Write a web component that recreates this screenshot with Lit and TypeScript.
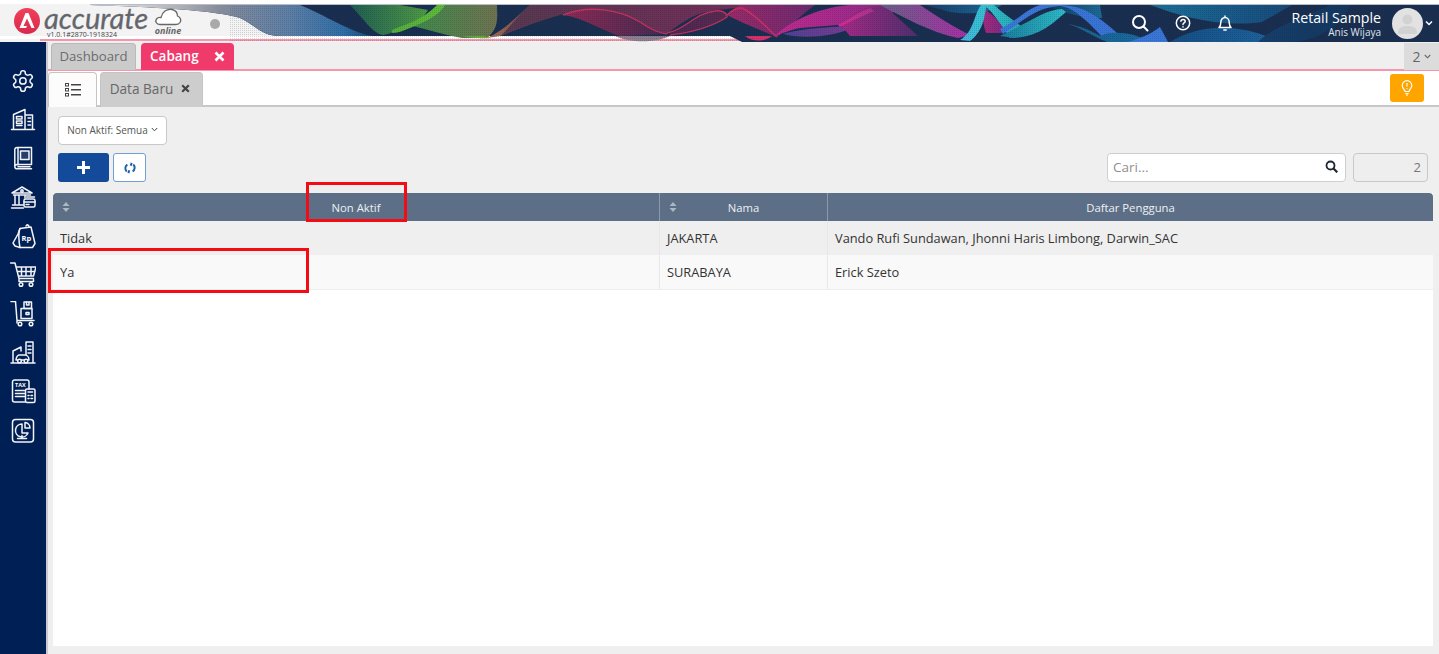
import { LitElement, html, css, svg } from "lit";
import { customElement } from "lit/decorators.js";

// banner shapes, painted in order over the navy base
type Shape = { d: string; from: string; to: string; edge?: string };

const SHAPES: Shape[] = [
  // green part
  { d: "M350 5C365 20 372 33 383 35C395 33 410 25 422 19L428 10L400 5Z", from: "#1f5d52", to: "#4f9a44" },
  { d: "M440 5C430 15 420 22 413 26C430 30 445 35 462 38H487C500 28 497 15 497 5Z", from: "#3f8a4a", to: "#6f7350" },
  { d: "M392 30C405 24 420 22 437 5H445C440 15 425 22 410 28C403 31 397 33 392 33Z", from: "#55ad3c", to: "#5fbc38" },
  { d: "M462 36C468 37 480 39 490 38L484 36Z", from: "#63b33a", to: "#63b33a" },
  // brown to mauve
  { d: "M487 38C505 30 515 18 530 5H565L563 14C540 20 520 28 500 36Z", from: "#a06c50", to: "#4e3a50" },
  { d: "M500 36C520 28 540 20 563 14C590 5 615 12 640 24C650 30 660 33 667 33C680 25 690 15 710 11C720 9 730 9 737 8C760 8 780 8 805 5H530C515 18 510 28 500 36Z", from: "#57384f", to: "#7a2c5c" },
  // plum bodies with pink crests
  { d: "M563 15C590 4 620 10 640 22C650 29 658 33 667 34L620 36C600 30 585 18 563 15Z", from: "#8c2a55", to: "#452a50", edge: "M563 15C590 4 620 10 640 22C650 29 658 33 667 34" },
  { d: "M667 33C685 30 695 13 715 11C725 10 728 14 727 17C715 25 695 32 680 35Z", from: "#4a2850", to: "#5a2a52", edge: "M667 33C685 30 695 13 715 11C722 10 727 13 727 17C715 25 695 32 670 35" },
  { d: "M727 15C740 22 760 30 777 37C790 28 800 15 815 5H740C735 8 730 11 727 15Z", from: "#9a2a68", to: "#6c2a70", edge: "M727 15C732 10 736 8 742 8C755 14 765 26 777 37" },
  // magenta
  { d: "M773 37C790 22 815 8 850 5H905C890 15 875 22 850 24L800 28C790 30 780 34 773 37Z", from: "#c02a8e", to: "#8a2a88" },
  { d: "M783 34C810 26 840 28 858 25C840 36 805 40 783 34Z", from: "#4f4296", to: "#7d3a90" },
  { d: "M840 24C855 12 862 6 885 6L918 36H850Z", from: "#a52a86", to: "#4f2e6c" },
  { d: "M838 25C850 19 858 12 870 8L874 11C862 16 850 22 840 27Z", from: "#d82c92", to: "#a8348c" },
  // lilac fan into cyan and blues
  { d: "M880 5H920C935 15 950 25 970 35L958 38C930 32 905 18 880 5Z", from: "#6a6088", to: "#a92fa4" },
  { d: "M925 5H1002C985 15 965 14 950 12Z", from: "#163f6b", to: "#1b6b9b" },
  { d: "M983 8C982 16 983 25 986 33H1005C1002 22 992 14 983 8Z", from: "#a52a80", to: "#7c2a80" },
  { d: "M960 40C974 32 974 14 981 5H987C984 14 985 30 970 41Z", from: "#4ab4dc", to: "#2fc4d2" },
  { d: "M984 5H994C1004 14 1016 22 1026 30L1010 38C1003 28 995 14 984 5Z", from: "#36c6d2", to: "#1f9fa8" },
  { d: "M1045 5C1065 14 1085 18 1102 18L1100 5Z", from: "#0f3a63", to: "#1d6a94" },
  { d: "M1000 36C1025 25 1045 9 1062 9L1066 12C1052 24 1040 36 1014 38Z", from: "#1a7a9c", to: "#2cbcc6" },
  { d: "M1003 34C1022 22 1036 7 1060 6C1075 7 1092 26 1107 42H1128C1108 26 1090 5 1060 5H1040C1028 8 1015 22 1000 29Z", from: "#3b77d8", to: "#3a72d6" },
  { d: "M1068 24C1080 27 1095 38 1108 42H1150C1135 32 1110 30 1100 36C1090 30 1080 26 1068 24Z", from: "#17628f", to: "#1a6aa0" },
  { d: "M1128 42C1148 36 1156 30 1160 27L1168 42Z", from: "#3a76d8", to: "#3a76d8" },
  { d: "M1150 5C1180 16 1220 28 1262 22L1292 5Z", from: "#1b6f99", to: "#17497a" },
  { d: "M1170 42C1195 26 1235 20 1280 42Z", from: "#154e82", to: "#1e639e" },
  { d: "M1258 42C1275 25 1300 20 1330 5H1350C1340 30 1310 42 1290 42Z", from: "#153f6b", to: "#14375f" },
];

const icons = [
  svg`<path transform="translate(.6 .6) scale(1.03)" d="M12.22 2h-.44a2 2 0 0 0-2 2v.18a2 2 0 0 1-1 1.73l-.43.25a2 2 0 0 1-2 0l-.15-.08a2 2 0 0 0-2.73.73l-.22.38a2 2 0 0 0 .73 2.73l.15.1a2 2 0 0 1 1 1.72v.51a2 2 0 0 1-1 1.74l-.15.09a2 2 0 0 0-.73 2.73l.22.38a2 2 0 0 0 2.73.73l.15-.08a2 2 0 0 1 2 0l.43.25a2 2 0 0 1 1 1.73V20a2 2 0 0 0 2 2h.44a2 2 0 0 0 2-2v-.18a2 2 0 0 1 1-1.73l.43-.25a2 2 0 0 1 2 0l.15.08a2 2 0 0 0 2.73-.73l.22-.39a2 2 0 0 0-.73-2.73l-.15-.08a2 2 0 0 1-1-1.74v-.5a2 2 0 0 1 1-1.74l.15-.09a2 2 0 0 0 .73-2.73l-.22-.38a2 2 0 0 0-2.73-.73l-.15.08a2 2 0 0 1-2 0l-.43-.25a2 2 0 0 1-1-1.73V4a2 2 0 0 0-2-2z"/><circle cx="12.9" cy="12.9" r="3.2"/>`,
  svg`<path d="M1.500 22.500h23M3.500 22V7.500L15 2.500v20M15 8h7.500v14.500M6.500 9.500h5.500v2.500H6.500zM6.500 14h5.500v2.500H6.500zM6.500 18.500h5.500M18 11h2.500M18 14.500h2.500M18 18h2.500"/>`,
  svg`<path d="M7 1.500h14.500v17H7A2.200 2.200 0 0 0 4.800 20.700 2.200 2.200 0 0 0 7 22.800h14.500M4.800 20.700V3.700A2.200 2.200 0 0 1 7 1.500M8 19V2M8 20.700h12"/><rect x="10.500" y="5" width="8.500" height="8.500" fill="#fff" fill-opacity=".15"/>`,
  svg`<path d="M2 8 12 2l10 6H2ZM3.500 10h17M5 11v8M9 11v8M15 11v2M2.500 20h11M1.500 23h12"/><circle cx="12" cy="6" r="1.200"/><rect x="14" y="14" width="11" height="8" rx="1.500"/><path d="M14 17h11M16 19.500h3M16.500 12h8"/>`,
  svg`<path d="M10 4.500 21 3l4 16.500-2.500 4H10L5 22 3 19l5-9z"/><path d="M10 4.500C8 8 9 19 10 23.500M19 3c0-2-2-3-3-1"/><text x="11.500" y="17" font-size="7.500" font-weight="700" font-family="Open Sans" fill="#fff" stroke="none">Rp</text>`,
  svg`<path d="M.5 1H5l4 15.500h14.500M6 5h20l-2.500 9H8.500M11.500 5v9M16 5v9M21 5v9M7 9.500h18M9 17.500v2h14.500v-2"/><circle cx="11" cy="22.500" r="1.800"/><circle cx="21" cy="22.500" r="1.800"/>`,
  svg`<path d="M1 .5h4.500l1.500 19h17M7 20v2"/><rect x="11" y="7.500" width="11" height="10"/><rect x="14" y="1" width="7.500" height="6.500"/><path d="M16 11.500h3v2h-3ZM16.500 1v3h2.500V1"/><circle cx="10" cy="23" r="1.800"/><circle cx="21" cy="23" r="1.800"/>`,
  svg`<path d="M1 23h24M3 22V11l8-4v4M16 22V2h7v20M18 6h3M18 9.500h3M18 13h3"/><path d="M6 20c0-3 2-5 3-5h6c2 0 4 2 4 5z" fill="#001f54"/><circle cx="9.500" cy="21" r="1.800" fill="#001f54"/><circle cx="16" cy="21" r="1.800" fill="#001f54"/>`,
  svg`<path d="M15 23H4.500A2 2 0 0 1 2.500 21V3A2 2 0 0 1 4.500 1H17a2 2 0 0 1 2 2v7M5.500 11.500h9M5.500 14.500h9M5.500 17.500h9"/><rect x="15.500" y="10" width="9.500" height="13.500" rx="1.500"/><path d="M18 13h4.500M18 16.500h1M21 16.500h1.500M18 19.500h1M21 19.500h1.500"/><text x="5" y="8" font-size="5.500" font-weight="700" font-family="Open Sans" fill="#fff" stroke="none">TAX</text>`,
  svg`<rect x="2.500" y="1.500" width="21" height="22.500" rx="3"/><path d="M12 6a6.500 6.500 0 1 0 6 9h-6z"/><path d="M15 4.500a5.500 5.500 0 0 1 5 5.500h-5z"/><path d="M12 17.500v2.500M7.500 20.500h9"/>`,
];

@customElement("app-root")
export class AppRoot extends LitElement {
  static styles = css`
    :host {
      display: block;
      position: relative;
      width: 1439px;
      height: 654px;
      overflow: hidden;
      background: #efefef;
      font-family: "Open Sans", "Noto Sans", sans-serif;
      color: #333;
    }
    .header {
      position: relative;
      height: 42px;
      box-sizing: border-box;
      padding: 4px 6px 0 14px;
      display: flex;
      align-items: center;
      background: #fff;
    }
    .art {
      position: absolute;
      inset: 0;
      width: 1439px;
      height: 42px;
    }
    .logo,
    .tools,
    .user {
      position: relative;
    }
    .logo {
      display: flex;
      align-items: flex-start;
      height: 38px;
    }
    .mark {
      width: 26px;
      height: 26px;
      margin-top: 4px;
    }
    .word {
      width: 104px;
      margin-left: 4px;
      line-height: 1;
    }
    .word b {
      display: block;
      font: italic 400 29px/27px "Lato", sans-serif;
      color: #64666c;
      -webkit-text-stroke: 0.3px #64666c;
    }
    .word span {
      display: block;
      margin-left: 3px;
      font-size: 7px;
      line-height: 8px;
      color: #444;
      white-space: nowrap;
    }
    .cloud {
      margin: 3px 0 0 6px;
      width: 28px;
      text-align: center;
    }
    .cloud svg {
      display: block;
    }
    .cloud i {
      display: block;
      font: italic 700 9px/9px "Open Sans", sans-serif;
      color: #666;
    }
    .dot {
      width: 10px;
      height: 10px;
      margin: 15px 0 0 28px;
      border-radius: 50%;
      background: #a9a9a9;
    }
    .tools {
      margin-left: auto;
      display: flex;
      align-items: center;
      gap: 26px;
    }
    .tools svg {
      display: block;
      fill: none;
      stroke: #fff;
      stroke-linecap: round;
      stroke-linejoin: round;
    }
    .user {
      margin-left: 58px;
      display: flex;
      align-items: center;
      color: #fff;
    }
    .names {
      text-align: right;
      margin-right: 11px;
    }
    .names b {
      display: block;
      font-weight: 400;
      font-size: 14.200px;
      line-height: 17px;
    }
    .names span {
      display: block;
      margin-top: 1px;
      font-size: 10px;
      line-height: 11px;
      color: #dfe5ee;
    }
    .avatar {
      width: 31px;
      height: 31px;
      border-radius: 50%;
      background: #e2e2e2;
      overflow: hidden;
    }
    .caret {
      margin-left: 2px;
    }
    .page {
      display: flex;
      height: 612px;
    }
    .side {
      width: 46px;
      flex: none;
      box-sizing: border-box;
      padding-top: 26px;
      background: #001f54;
      display: flex;
      flex-direction: column;
      align-items: center;
      gap: 12.900px;
    }
    .side svg {
      display: block;
      width: 26px;
      height: 26px;
      fill: none;
      stroke: #f2f4f8;
      stroke-width: 1.5;
      stroke-linejoin: round;
      stroke-linecap: round;
    }
    .main {
      flex: 1;
      min-width: 0;
      display: flex;
      flex-direction: column;
      border-left: 2px solid #c9c9cf;
    }
    .tabs {
      height: 29px;
      box-sizing: border-box;
      padding: 1px 0 0 1px;
      display: flex;
      gap: 5px;
      border-bottom: 2px solid #f596ad;
      flex: none;
    }
    .tab {
      display: flex;
      align-items: center;
      box-sizing: border-box;
      height: 27px;
      padding-bottom: 2px;
      border-radius: 4px 4px 0 0;
      font-size: 13.200px;
    }
    .tab.off {
      width: 85px;
      margin-left: 2px;
      justify-content: center;
      background: #cbcbcb;
      color: #6c6c6c;
      border: 1px solid #b9b9b9;
      border-bottom: 0;
    }
    .tab.on {
      width: 93px;
      padding: 0 9px 1px;
      justify-content: space-between;
      background: #f03a6b;
      color: #fff;
      font-weight: 600;
      font-size: 13.500px;
    }
    .count-tab {
      margin-left: auto;
      width: 35px;
      height: 27px;
      background: #dcdcdc;
      color: #666;
      font-size: 14px;
      display: flex;
      align-items: center;
      justify-content: center;
      gap: 3px;
    }
    .subtabs {
      flex: none;
      height: 36px;
      box-sizing: border-box;
      background: #fff;
      border-bottom: 2px solid #c8c8c8;
      display: flex;
      gap: 3px;
      padding-top: 1px;
    }
    .sub {
      box-sizing: border-box;
      height: 35px;
      padding-bottom: 3px;
      border: 1px solid #c4c4c4;
      border-bottom: 0;
      border-radius: 4px 4px 0 0;
      display: flex;
      align-items: center;
      justify-content: center;
      font-size: 13.600px;
      color: #666;
    }
    .sub.list {
      width: 49px;
      background: #fcfcfc;
      padding-bottom: 1px;
    }
    .sub.data {
      width: 103px;
      padding-right: 3px;
      background: #cdcdcd;
      gap: 8px;
    }
    .bulb {
      margin: 2px 15px 0 auto;
      width: 34px;
      height: 28px;
      border-radius: 3px;
      background: #ffa500;
      display: flex;
      align-items: center;
      justify-content: center;
    }
    .content {
      flex: 1;
      min-height: 0;
      box-sizing: border-box;
      padding: 9px 6px 8px 5px;
      display: flex;
      flex-direction: column;
    }
    .filter {
      box-sizing: border-box;
      width: 109px;
      height: 29px;
      margin-left: 5px;
      padding-bottom: 2px;
      background: #fff;
      border: 1px solid #c8c8c8;
      border-radius: 4px;
      font-size: 10px;
      color: #555;
      display: flex;
      align-items: center;
      justify-content: center;
      gap: 3px;
      white-space: nowrap;
    }
    .bar {
      margin: 8px 5px 11px 5px;
      display: flex;
      align-items: center;
      gap: 4px;
    }
    .add {
      width: 51px;
      height: 29px;
      border-radius: 3px;
      background: #134a9a;
      display: flex;
      align-items: center;
      justify-content: center;
    }
    .refresh {
      box-sizing: border-box;
      width: 33px;
      height: 29px;
      border: 1px solid #6f9fd4;
      border-radius: 3px;
      background: #fff;
      display: flex;
      align-items: center;
      justify-content: center;
    }
    .search {
      box-sizing: border-box;
      margin-left: auto;
      width: 239px;
      height: 29px;
      padding: 0 7px 2px 5px;
      background: #fff;
      border: 1px solid #cfcfcf;
      border-radius: 4px;
      display: flex;
      align-items: center;
      justify-content: space-between;
      font-size: 13.500px;
      color: #8f8f8f;
    }
    .total {
      box-sizing: border-box;
      width: 75px;
      height: 29px;
      margin-left: 3px;
      padding: 0 6px 2px 0;
      background: #eee;
      border: 1px solid #c8c8c8;
      border-radius: 4px;
      font-size: 13px;
      color: #777;
      display: flex;
      align-items: center;
      justify-content: flex-end;
    }
    .table {
      flex: 1;
      min-height: 0;
      background: #fff;
      display: grid;
      grid-template-columns: 606px 168px 606px;
      grid-auto-rows: min-content;
      font-size: 12.800px;
    }
    .th {
      position: relative;
      height: 28px;
      box-sizing: border-box;
      display: flex;
      align-items: center;
      justify-content: center;
      background: #5c6f86;
      color: #edf0f4;
      font-size: 11.300px;
      border-left: 1px solid #8a99ab;
    }
    .th:first-child {
      border-left: 0;
      border-radius: 4px 0 0 0;
    }
    .th:nth-child(3) {
      border-radius: 0 4px 0 0;
    }
    .sort {
      position: absolute;
      left: 9px;
      top: 9px;
    }
    .td {
      box-sizing: border-box;
      height: 34px;
      padding: 0 0 1px 7px;
      display: flex;
      align-items: center;
      border-left: 1px solid #e8e8e8;
      color: #333;
      background: #efefef;
    }
    .td.alt {
      height: 35px;
      background: #f9f9f9;
      border-bottom: 1px solid #eeeeee;
    }
    .td.first {
      border-left: 0;
    }
    .mark-box {
      position: absolute;
      box-sizing: border-box;
      border: 3px solid #f40c14;
    }
  `;

  private art() {
    return svg`
      <defs>
        <linearGradient id="left" x1="0" x2="1" y1="0" y2="0">
          <stop offset="0" stop-color="#f3f3f3" />
          <stop offset=".3" stop-color="#b2b4b9" />
          <stop offset=".46" stop-color="#858c9a" />
          <stop offset=".7" stop-color="#5f7fa5" />
          <stop offset=".9" stop-color="#2f6ea6" />
          <stop offset="1" stop-color="#1a4a78" />
        </linearGradient>
        ${SHAPES.map(
          (s, i) => svg`<linearGradient id="s${i}" x1="0" x2="1" y1="0" y2="0">
            <stop offset="0" stop-color=${s.from} /><stop offset="1" stop-color=${s.to} />
          </linearGradient>`,
        )}
        <pattern id="dither" width="2" height="2" patternUnits="userSpaceOnUse">
          <rect width="1" height="1" fill="#0b1a33" opacity=".16" />
        </pattern>
        <clipPath id="band"><rect y="5" width="1439" height="37" /></clipPath>
      </defs>
      <rect width="1439" height="42" fill="#f3f3f3" />
      <rect width="1439" height="4" fill="#fff" />
      <rect x="90" y="4" width="1349" height="1" fill="#b9bcc4" />
      <rect y="36" width="1439" height="3" fill="#fff" />
      <rect x="40" y="39" width="1399" height="2" fill="#f596ad" />
      <path d="M730 36L742 42H1439V5H90C150 7 215 10 240 18C255 25 262 36 280 36Z" fill="#1a2f50" />
      <path d="M90 5C150 7 215 10 240 18C255 25 262 36 280 36H372C350 32 325 15 300 5Z" fill="url(#left)" />
      <path d="M615 36C630 43 655 43 670 36Z" fill="#8f7f90" />
      <path d="M745 36C752 42 765 42 772 36Z" fill="#d8306a" />
      <g clip-path="url(#band)">
        ${SHAPES.map(
          (s, i) => svg`<path d=${s.d} fill=${`url(#s${i})`} />
            ${s.edge ? svg`<path d=${s.edge} fill="none" stroke="#d8325f" stroke-width="1.400" opacity=".85" />` : ""}`,
        )}
        <rect x="230" y="5" width="1209" height="37" fill="url(#dither)" />
      </g>
    `;
  }

  private sortIcon() {
    return html`<svg class="sort" width="8" height="10" viewBox="0 0 8 10">
      <path d="M4 0 7.500 4h-7zM4 10 .5 6h7z" fill="#aeb8c4" />
    </svg>`;
  }

  render() {
    return html`
      <div class="header">
        <svg class="art" viewBox="0 0 1439 42">${this.art()}</svg>
        <div class="logo">
          <svg class="mark" viewBox="0 0 26 26">
            <defs>
              <linearGradient id="red" x1="0" x2="0" y1="0" y2="1">
                <stop offset="0" stop-color="#f0405a" /><stop offset="1" stop-color="#d92a4c" />
              </linearGradient>
            </defs>
            <circle cx="13" cy="13" r="13" fill="url(#red)" />
            <path d="M11.500 5h3L20.500 20H17.500L13 10.500 9.500 18H13l-1 2H5.500z" fill="#fff" />
          </svg>
          <div class="word"><b>accurate</b><span>v1.0.1#2870-1918324</span></div>
          <div class="cloud">
            <svg width="28" height="19" viewBox="0 0 28 19">
              <path d="M6 17.500C2 17.500 1 14 2.500 12 4 10 6 10.500 7 10.500 8 5 13 1.500 18 2.500c4 1 5.500 4 5.500 6.500 3 1 4 4 2.500 6.500-1 1.500-2.500 2-4 2z" fill="#fff" stroke="#666" stroke-width="1.300" />
            </svg>
            <i>online</i>
          </div>
          <div class="dot"></div>
        </div>
        <div class="tools">
          <svg width="18" height="18" viewBox="0 0 18 18" stroke-width="2">
            <circle cx="8" cy="8" r="6" /><path d="m12.500 12.500 4 4" />
          </svg>
          <svg width="16" height="16" viewBox="0 0 16 16" stroke-width="1.500">
            <circle cx="8" cy="8" r="6.700" />
            <path d="M5.900 6.200C6 3.800 10.200 3.800 10.200 6.300 10.200 8 8 7.900 8 9.500M8 11.700v.2" />
          </svg>
          <svg width="16" height="16" viewBox="0 0 16 16" stroke-width="1.500">
            <path d="M2 12.500h12c-1.500-1.500-1.800-2.500-1.800-5C12.200 5 10.500 2.500 8 2.500S3.800 5 3.800 7.500c0 2.500-.3 3.500-1.800 5zM8 1v1.500M6.800 15h2.400" />
          </svg>
        </div>
        <div class="user">
          <div class="names"><b>Retail Sample</b><span>Anis Wijaya</span></div>
          <div class="avatar">
            <svg width="31" height="31" viewBox="0 0 31 31">
              <circle cx="15.500" cy="11.500" r="5" fill="#d2d2d2" />
              <path d="M6 26c0-7 4-8 9.500-8s9.500 1 9.500 8z" fill="#d2d2d2" />
            </svg>
          </div>
          <svg class="caret" width="8" height="6" viewBox="0 0 8 6">
            <path d="M1 1.500 4 4.500l3-3" fill="none" stroke="#fff" stroke-width="1.500" />
          </svg>
        </div>
      </div>
      <div class="page">
        <nav class="side">
          ${icons.map((i) => html`<svg viewBox="0 0 26 26">${i}</svg>`)}
        </nav>
        <div class="main">
          <div class="tabs">
            <div class="tab off">Dashboard</div>
            <div class="tab on">
              Cabang
              <svg width="11" height="11" viewBox="0 0 11 11">
                <path d="m1.500 1.500 8 8m0-8-8 8" stroke="#fff" stroke-width="2.600" />
              </svg>
            </div>
            <div class="count-tab">
              2
              <svg width="7" height="5" viewBox="0 0 7 5"><path d="M.8 1 3.500 3.800 6.200 1" fill="none" stroke="#666" stroke-width="1.100" /></svg>
            </div>
          </div>
          <div class="subtabs">
            <div class="sub list">
              <svg width="16" height="14" viewBox="0 0 16 14" fill="none" stroke="#444">
                <rect x=".5" y=".5" width="3" height="2.500" /><rect x=".5" y="5.500" width="3" height="2.500" /><rect x=".5" y="10.500" width="3" height="2.500" />
                <path d="M6 1.800h10M6 6.800h10M6 11.800h10" stroke-width="1.600" />
              </svg>
            </div>
            <div class="sub data">
              Data Baru
              <svg width="9" height="9" viewBox="0 0 9 9"><path d="m1.200 1.200 6.600 6.600m0-6.600-6.600 6.600" stroke="#444" stroke-width="2.200" /></svg>
            </div>
            <div class="bulb">
              <svg width="12" height="16" viewBox="0 0 12 16" fill="none" stroke="#fff" stroke-width="1.200">
                <path d="M4 11.500C4 9.500 1.200 8.500 1.200 5.500a4.800 4.800 0 0 1 9.600 0c0 3-2.800 4-2.800 6z" />
                <path d="M6 3v3.500M6 8v.7M4.300 13.500h3.400" /><path d="M5 15h2" />
              </svg>
            </div>
          </div>
          <div class="content">
            <div class="filter">
              Non Aktif: Semua
              <svg width="7" height="5" viewBox="0 0 7 5"><path d="M.8 1 3.500 3.800 6.200 1" fill="none" stroke="#444" stroke-width="1" /></svg>
            </div>
            <div class="bar">
              <div class="add">
                <svg width="13" height="13" viewBox="0 0 13 13"><path d="M6.500 0v13M0 6.500h13" stroke="#fff" stroke-width="3" /></svg>
              </div>
              <div class="refresh">
                <svg width="12" height="12" viewBox="0 0 11 11" fill="none" stroke="#1a62a8" stroke-width="1.800">
                  <path d="M8.500 2.300a4 4 0 0 1-.6 6.300M2.500 8.700a4 4 0 0 1 .6-6.300" />
                  <path d="M7 .8 6.200 3.500M4 10.200l.8-2.700" />
                </svg>
              </div>
              <div class="search">
                Cari...
                <svg width="13" height="13" viewBox="0 0 13 13" fill="none" stroke="#1c2733" stroke-width="1.800">
                  <circle cx="5.500" cy="5.500" r="4" /><path d="m8.500 8.500 3.800 3.800" stroke-width="2.200" />
                </svg>
              </div>
              <div class="total">2</div>
            </div>
            <div class="table">
              <div class="th">${this.sortIcon()}Non Aktif</div>
              <div class="th">${this.sortIcon()}Nama</div>
              <div class="th">Daftar Pengguna</div>
              <div class="td first">Tidak</div>
              <div class="td">JAKARTA</div>
              <div class="td">Vando Rufi Sundawan, Jhonni Haris Limbong, Darwin_SAC</div>
              <div class="td alt first">Ya</div>
              <div class="td alt">SURABAYA</div>
              <div class="td alt">Erick Szeto</div>
            </div>
          </div>
        </div>
      </div>
      <div class="mark-box" style="left:306px;top:182px;width:101px;height:40px"></div>
      <div class="mark-box" style="left:48px;top:248px;width:261px;height:45px"></div>
    `;
  }
}
